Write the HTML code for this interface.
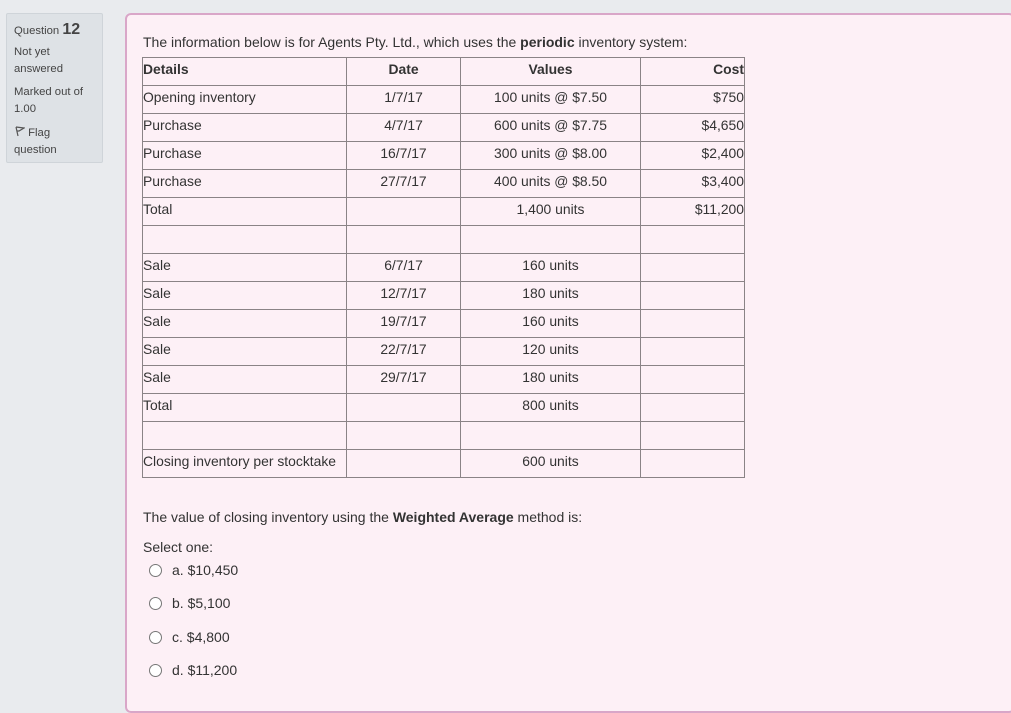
<!DOCTYPE html>
<html><head><style>
body{margin:0;width:1011px;height:694px;background:#e9ebee;font-family:"Liberation Sans",Arial,sans-serif;color:#333;position:relative;overflow:hidden}
.side{position:absolute;left:6px;top:13px;width:97px;height:150px;background:#dee2e6;border:1px solid #cfd4d9;border-radius:2px;font-size:11.3px;line-height:17px;box-sizing:border-box;padding:7px 7px;color:#444}
.side b{font-size:16px}
.panel{position:absolute;left:125px;top:13px;width:890px;height:700px;background:#fdf0f6;border:2px solid #d9a6c8;border-radius:6px;box-sizing:border-box}
.intro{position:absolute;left:16px;top:19px;font-size:14px}
table{position:absolute;left:15px;top:42px;border-collapse:collapse;font-size:13.9px}
td{border:1px solid #8a8386;height:27px;padding:0;vertical-align:top;line-height:22px}
td.c{text-align:center}td.r{text-align:right}
.q{position:absolute;left:16px;font-size:14px}
.opt{position:absolute;left:22px;font-size:14px}
.opt span{display:inline-block;width:11px;height:11px;border:1px solid #777;border-radius:50%;vertical-align:-2px;margin-right:10px;background:#fff}
</style></head><body>
<div class="side"><div>Question <b>12</b></div><div style="margin-top:4px">Not yet<br>answered</div><div style="margin-top:6px">Marked out of<br>1.00</div><div style="margin-top:7px"><svg width="11" height="11" viewBox="0 0 11 11" style="vertical-align:-1px"><path d="M2 1 L4 10 M2 1 L10 2 L5 5 L3 5" fill="none" stroke="#555" stroke-width="1.2"/></svg> Flag<br>question</div></div>
<div class="panel">
<div class="intro">The information below is for Agents Pty. Ltd., which uses the <b>periodic</b> inventory system:</div>
<table>
<colgroup><col style="width:204px"><col style="width:114px"><col style="width:180px"><col style="width:104px"></colgroup>
<tr><td><b>Details</b></td><td class="c"><b>Date</b></td><td class="c"><b>Values</b></td><td class="r"><b>Cost</b></td></tr>
<tr><td>Opening inventory</td><td class="c">1/7/17</td><td class="c">100 units @ $7.50</td><td class="r">$750</td></tr>
<tr><td>Purchase</td><td class="c">4/7/17</td><td class="c">600 units @ $7.75</td><td class="r">$4,650</td></tr>
<tr><td>Purchase</td><td class="c">16/7/17</td><td class="c">300 units @ $8.00</td><td class="r">$2,400</td></tr>
<tr><td>Purchase</td><td class="c">27/7/17</td><td class="c">400 units @ $8.50</td><td class="r">$3,400</td></tr>
<tr><td>Total</td><td></td><td class="c">1,400 units</td><td class="r">$11,200</td></tr>
<tr><td></td><td></td><td></td><td></td></tr>
<tr><td>Sale</td><td class="c">6/7/17</td><td class="c">160 units</td><td></td></tr>
<tr><td>Sale</td><td class="c">12/7/17</td><td class="c">180 units</td><td></td></tr>
<tr><td>Sale</td><td class="c">19/7/17</td><td class="c">160 units</td><td></td></tr>
<tr><td>Sale</td><td class="c">22/7/17</td><td class="c">120 units</td><td></td></tr>
<tr><td>Sale</td><td class="c">29/7/17</td><td class="c">180 units</td><td></td></tr>
<tr><td>Total</td><td></td><td class="c">800 units</td><td></td></tr>
<tr><td></td><td></td><td></td><td></td></tr>
<tr><td>Closing inventory per stocktake</td><td></td><td class="c">600 units</td><td></td></tr>
</table>
<div class="q" style="top:494px">The value of closing inventory using the <b>Weighted Average</b> method is:</div>
<div class="q" style="top:524px">Select one:</div>
<div class="opt" style="top:547px"><span></span>a. $10,450</div>
<div class="opt" style="top:580px"><span></span>b. $5,100</div>
<div class="opt" style="top:614px"><span></span>c. $4,800</div>
<div class="opt" style="top:647px"><span></span>d. $11,200</div>
</div>
</body></html>
